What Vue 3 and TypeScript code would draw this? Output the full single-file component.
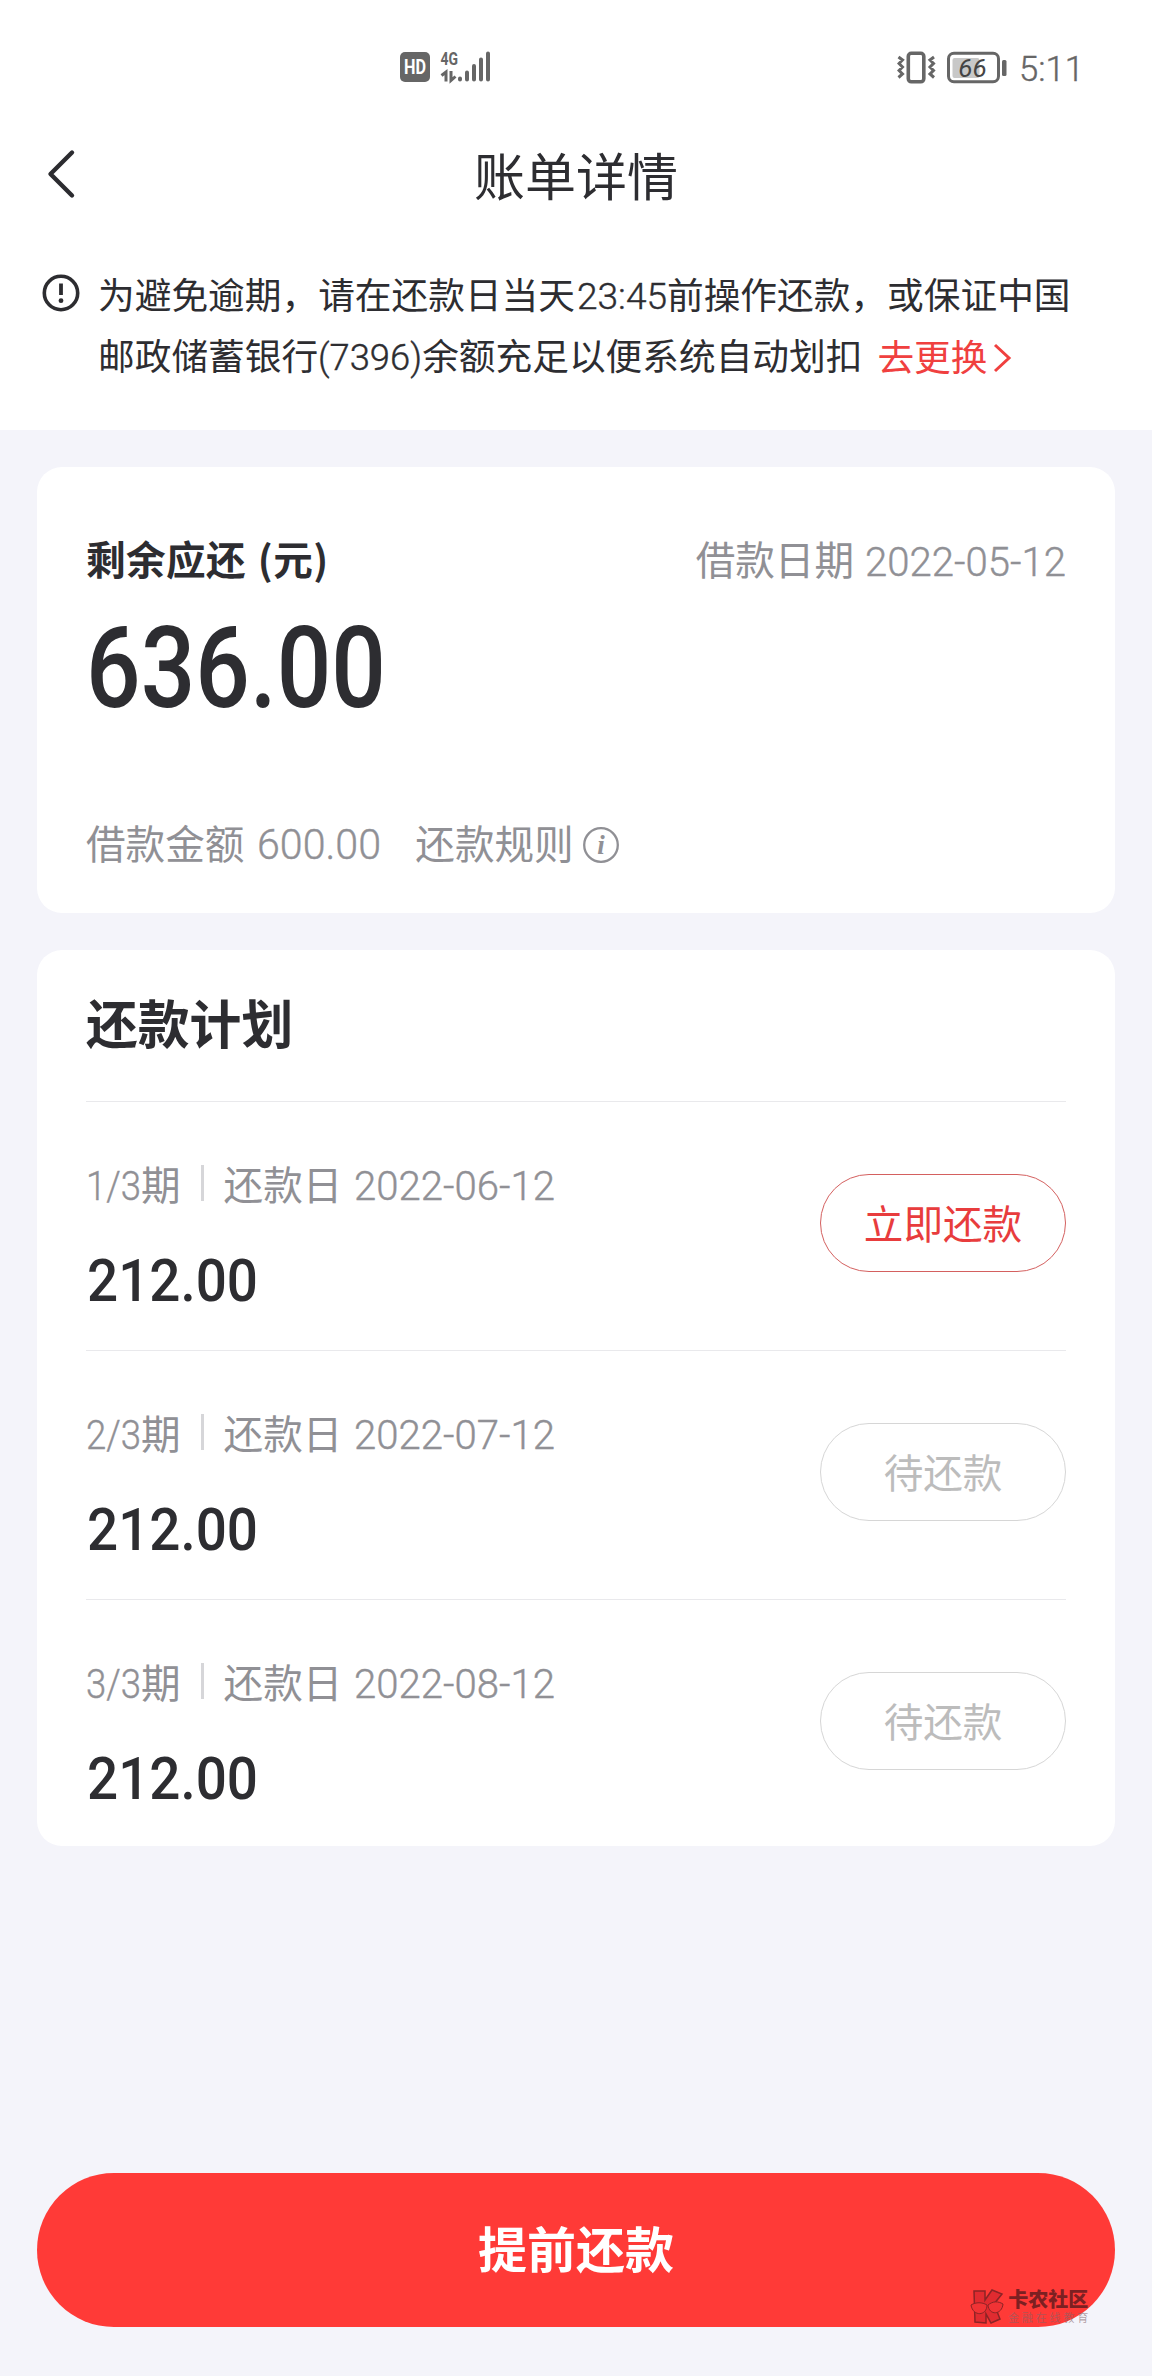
<script setup lang="ts">
import { h } from 'vue'

interface NumProps {
  text: string
  w: number
  cap: number
  weight?: number
}

interface Installment {
  index: string
  date: string
  amount: string
  due: boolean
}

const CAP_RATIO = 0.711

// Condensed numerals: the box is as tall as a digit and sits on the text baseline
const Num = (p: NumProps) =>
  h('svg', { class: ['num', { thin: !p.weight }], width: p.w, height: p.cap }, [
    h(
      'text',
      {
        x: 0,
        y: p.cap,
        'font-size': p.cap / CAP_RATIO,
        'font-weight': p.weight ?? 300,
        textLength: p.w,
        lengthAdjust: 'spacingAndGlyphs',
      },
      p.text,
    ),
  ])
Num.props = ['text', 'w', 'cap', 'weight']

const installments: Installment[] = [
  { index: '1/3', date: '2022-06-12', amount: '212.00', due: true },
  { index: '2/3', date: '2022-07-12', amount: '212.00', due: false },
  { index: '3/3', date: '2022-08-12', amount: '212.00', due: false },
]
</script>

<template>
  <div class="page">
    <header class="top">
      <div class="status">
        <div class="status-left">
          <svg class="signal" width="92" height="32" viewBox="0 0 92 32">
            <rect x="0" y="1" width="30" height="30" rx="5" fill="#666" />
            <text x="15" y="23" text-anchor="middle" textLength="22" lengthAdjust="spacingAndGlyphs" class="hd">HD</text>
            <text x="40.5" y="14" textLength="17.5" lengthAdjust="spacingAndGlyphs" class="net">4G</text>
            <path d="M41.5 24.500L46 21V30.500M51 20V29.500L55.500 25.500" fill="none" stroke="#666" stroke-width="3" />
            <path d="M60 27.500V28.500M67 21.500V28.500M74 15V28.500M81 8.500V28.500M88 2.500V28.500" stroke="#666" stroke-width="4" stroke-linecap="round" />
          </svg>
        </div>
        <div class="status-right">
          <svg width="110" height="34" viewBox="0 0 110 34">
            <rect x="11.300" y="2.300" width="15.500" height="28.500" rx="3" fill="none" stroke="#666" stroke-width="3.600" />
            <path d="M1.500 6L5.500 9L2 12.500L5.500 16L2 19.500L5.500 23L1.500 26.500M37 6L33 9L36.500 12.500L33 16L36.500 19.500L33 23L37 26.500" fill="none" stroke="#666" stroke-width="3" />
            <rect x="51.500" y="2.300" width="50" height="28.500" rx="5.500" fill="none" stroke="#666" stroke-width="3" />
            <rect x="55.500" y="7" width="27" height="20" rx="2" fill="#c8c8c8" />
            <text x="75.500" y="26" text-anchor="middle" class="battery">66</text>
            <rect x="105" y="9" width="4.500" height="16" rx="1.500" fill="#666" />
          </svg>
          <Num class="clock" text="5:11" :w="65" :cap="25" />
        </div>
      </div>

      <nav class="nav">
        <svg class="back" width="32" height="52" viewBox="0 0 32 52">
          <path d="M27 4.500L5.500 26L27 47.500" fill="none" stroke="#2c2c30" stroke-width="4.400" stroke-linecap="round" stroke-linejoin="round" />
        </svg>
        <h1>账单详情</h1>
      </nav>

      <div class="notice">
        <svg class="alert" width="38" height="38" viewBox="0 0 38 38">
          <circle cx="19" cy="19" r="16.700" fill="none" stroke="#2c2c30" stroke-width="3.600" />
          <path d="M19 9.500V21" stroke="#2c2c30" stroke-width="3.800" />
          <circle cx="19" cy="26.700" r="2.400" fill="#2c2c30" />
        </svg>
        <div>
          <p>为避免逾期，请在还款日当天<Num class="time" text="23:45" :w="90" :cap="26" />前操作还款，或保证中国</p>
          <p>
            邮政储蓄银行<Num text="(7396)" :w="104" :cap="26" />余额充足以便系统自动划扣<a class="change">去更换<svg width="22" height="32" viewBox="0 0 22 32"><path d="M3 3L17 16L3 29" fill="none" stroke="#f0403f" stroke-width="3" /></svg></a>
          </p>
        </div>
      </div>
    </header>

    <main>
      <section class="card summary">
        <div class="line">
          <strong>剩余应还 (元)</strong>
          <span class="muted">借款日期<Num class="gap" text="2022-05-12" :w="201" :cap="28.5" /></span>
        </div>
        <div class="total"><Num text="636.00" :w="300" :cap="81" :weight="500" /></div>
        <div class="line bottom muted">
          <span>借款金额<Num class="gap-mid" text="600.00" :w="124" :cap="30" /></span>
          <span class="rules">还款规则</span>
          <svg class="info" width="38" height="38" viewBox="0 0 38 38">
            <circle cx="19" cy="19" r="16.800" fill="none" stroke="#909095" stroke-width="2.300" />
            <text x="19" y="28" text-anchor="middle">i</text>
          </svg>
        </div>
      </section>

      <section class="card plan">
        <h2>还款计划</h2>
        <div v-for="item in installments" :key="item.index" class="row">
          <div class="detail">
            <div class="muted term">
              <Num :text="item.index" :w="55" :cap="29" />期<i class="bar" />还款日<Num class="gap-wide" :text="item.date" :w="201" :cap="28.5" />
            </div>
            <div class="amount"><Num :text="item.amount" :w="171" :cap="42" :weight="500" /></div>
          </div>
          <button :class="['pill', { due: item.due }]">{{ item.due ? '立即还款' : '待还款' }}</button>
        </div>
      </section>
    </main>

    <footer>
      <button class="prepay">提前还款</button>
      <div class="watermark">
        <svg width="36" height="36" viewBox="0 0 36 36">
          <path d="M5 2H16V11L23 1L33 5L25 15L31 30L22 34L17 25V34L6 33Z" fill="#e12b30" stroke="#8c2426" stroke-width="1.500" />
          <path d="M2 16C7 13 13 13 18 16C18 27 4 28 2 16ZM19 16C24 12 29 12 34 15C33 26 20 27 19 16Z" fill="#f03335" stroke="#8c2426" stroke-width="1" />
        </svg>
        <div>
          <div class="mark-name">卡农社区</div>
          <div class="mark-sub">金融在线教育</div>
        </div>
      </div>
    </footer>
  </div>
</template>

<style>
body {
  background: #f4f4fa;
}
</style>

<style scoped>
.page {
  width: 1152px;
  height: 2376px;
  display: flex;
  flex-direction: column;
  background: #f4f4fa;
  color: #2d2d31;
  font-family: 'Noto Sans CJK SC', sans-serif;
  overflow: hidden;
}
.page * {
  box-sizing: border-box;
}
h1,
h2,
p {
  margin: 0;
}
button {
  font-family: inherit;
  padding: 0;
}
.num {
  font-family: Roboto, sans-serif;
  fill: currentColor;
  overflow: visible;
  flex: none;
}
.thin {
  stroke: currentColor;
  stroke-width: 0.4px;
}
.top {
  height: 430px;
  background: #fff;
}
.status {
  height: 134px;
  padding: 51px 70px 0 400px;
  display: flex;
  justify-content: space-between;
}
.status-right {
  display: flex;
  width: 185px;
}
.status-right > svg {
  flex: none;
}
.signal {
  overflow: visible;
}
.hd {
  font: 700 20px Roboto, sans-serif;
  fill: #fff;
}
.net {
  font: 700 18px Roboto, sans-serif;
  fill: #666;
}
.battery {
  font: italic 400 26px Roboto, sans-serif;
  fill: #444;
}
.clock {
  margin: 5px 0 0 12px;
  color: #666;
}
.nav {
  height: 80px;
  display: flex;
  align-items: center;
}
.back {
  margin-left: 45px;
}
h1 {
  flex: 1;
  padding-right: 77px;
  text-align: center;
  font-size: 51px;
  line-height: 80px;
  font-weight: 400;
}
.notice {
  display: flex;
  padding: 49px 0 0 42px;
  font-size: 36.7px;
  line-height: 60.5px;
}
.alert {
  margin: 11px 18px 0 0;
}
.notice p {
  height: 60.5px;
  white-space: nowrap;
}
.time {
  margin: 0 0 0 2px;
}
.change {
  margin-left: 15px;
  color: #f0403f;
  position: relative;
  top: 1px;
}
.change svg {
  margin-left: 5px;
  vertical-align: -3px;
}
main {
  padding: 37px 37px 0;
}
.card {
  background: #fff;
  border-radius: 25px;
  padding: 0 49px;
}
.summary {
  height: 446px;
  padding-top: 61px;
}
.line {
  display: flex;
  height: 60px;
  font-size: 39.6px;
  line-height: 60px;
  justify-content: space-between;
  white-space: nowrap;
}
.line strong {
  word-spacing: 2.5px;
  letter-spacing: 0.4px;
}
.muted {
  color: #909095;
}
.gap {
  margin-left: 11px;
}
.gap-mid {
  margin-left: 13px;
}
.gap-wide {
  margin-left: 12px;
}
.total {
  height: 81px;
  margin: 38px 0 105px;
  display: flex;
}
.bottom {
  justify-content: flex-start;
}
.rules {
  margin-left: 34px;
}
.info {
  margin: 14px 0 0 8px;
}
.info text {
  font: italic 700 27px 'Liberation Serif', serif;
  fill: #909095;
}
.plan {
  margin-top: 37px;
  height: 896px;
}
h2 {
  height: 151px;
  font-size: 51.8px;
  line-height: 143px;
  font-weight: 700;
}
.row {
  height: 249px;
  border-top: 1px solid #e9e9ec;
  display: flex;
  justify-content: space-between;
}
.term {
  display: flex;
  align-items: baseline;
  margin-top: 50.5px;
  height: 60px;
  line-height: 60px;
  font-size: 39.6px;
}
.bar {
  width: 3px;
  height: 36px;
  margin: 0 20px;
  background: #d6d6d9;
  align-self: center;
}
.amount {
  display: flex;
  margin: 46px 0 0 1px;
}
.pill {
  width: 246px;
  height: 98px;
  margin-top: 72px;
  border: 1px solid #d6d6d6;
  border-radius: 49px;
  background: #fff;
  color: #bcbcbc;
  font-size: 39.6px;
  line-height: 94px;
  padding-bottom: 3px;
}
.pill.due {
  color: #e83c3d;
  border-color: #d4605f;
}
footer {
  margin: 327px 37px 0;
  height: 154px;
  position: relative;
}
.prepay {
  width: 100%;
  height: 154px;
  border: 0;
  border-radius: 77px;
  background: #ff3a37;
  color: #fff;
  font-size: 49px;
  font-weight: 700;
  line-height: 148px;
  padding-bottom: 6px;
}
.watermark {
  position: absolute;
  right: 24px;
  bottom: 2px;
  display: flex;
  gap: 3px;
}
.mark-name {
  font-size: 20px;
  line-height: 20px;
  font-weight: 900;
  color: #7c2022;
}
.mark-sub {
  font-size: 11px;
  line-height: 16px;
  letter-spacing: 2.8px;
  color: rgba(130, 100, 105, 0.6);
}
</style>
